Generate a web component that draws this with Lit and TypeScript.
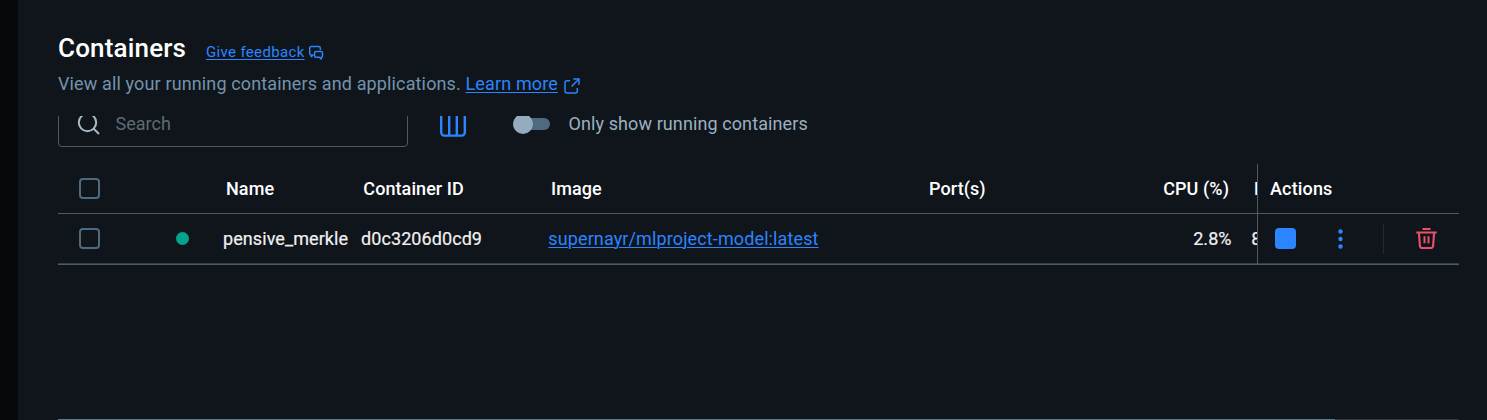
import { LitElement, html, css, svg } from "lit";
import { customElement } from "lit/decorators.js";

const feedbackIcon = svg`<svg width="16" height="16" viewBox="0 0 16 16" fill="none" stroke="currentColor" stroke-width="1.5" stroke-linejoin="round" stroke-linecap="round"><path d="M5.2 9.9H5L3.2 11.6V9.9Q1.7 9.9 1.7 8.4V3.1Q1.7 1.6 3.2 1.6H10.8Q12.3 1.6 12.3 3.1V4.6"/><path d="M8 6.4H13.1Q14.5 6.4 14.5 7.8V11Q14.5 12.3 13.3 12.3V14.1L11.4 12.3H8Q6.6 12.3 6.6 11V7.8Q6.6 6.4 8 6.4Z"/></svg>`;
const externalIcon = svg`<svg width="16" height="16" viewBox="0 0 16 16" fill="none" stroke="currentColor" stroke-width="1.5"><path d="M6 2.7H3Q1 2.7 1 4.7V13Q1 15 3 15H11.3Q13.3 15 13.3 13V10M9.3 1H15V6.7M15 1L7.5 8.5"/></svg>`;
const searchIcon = svg`<svg width="24" height="24" viewBox="0 0 24 24" fill="none" stroke="currentColor" stroke-width="2"><circle cx="10.5" cy="10.5" r="8.7"/><path d="M16.5 16.5L22 22"/></svg>`;
const columnsIcon = svg`<svg width="26" height="26" viewBox="0 0 26 26" fill="none" stroke="currentColor" stroke-width="2.4"><rect x="1.2" y="1.2" width="23.6" height="23.4" rx="3"/><path d="M9.2 1V24M16.8 1V24"/></svg>`;
const trashIcon = svg`<svg width="22" height="22" viewBox="0 0 22 22" fill="none" stroke="currentColor"><path stroke-width="2" d="M6.5 1H14.5M.3 4.6H20.7"/><path stroke-width="2.1" d="M2.9 4.7L3.9 17.8Q4.2 20 6.4 20H14.6Q16.8 20 17.1 17.8L18.1 4.7"/><path stroke-width="2" d="M8.5 8.3V15.3M12.5 8.3V15.3"/></svg>`;

@customElement("app-root")
export class AppRoot extends LitElement {
  static styles = css`
    :host { display: flex; height: 420px; overflow: hidden; background: #10151b; color: #fff; font: 18px/24px Roboto, sans-serif; }
    .rail { width: 18px; background: #05090c; flex: none; }
    main { flex: 1; min-width: 0; display: flex; flex-direction: column; padding: 0 28px 0 40px; }
    svg { display: block; flex: none; }
    a { color: #2a85ff; text-decoration: underline; text-underline-offset: 2px; text-decoration-thickness: 1px; }
    .title { display: flex; align-items: flex-start; height: 72px; box-sizing: border-box; padding-top: 32px; color: #2a85ff; }
    h1 { margin: 0; width: 148px; font-size: 26px; line-height: 32px; font-weight: 500; color: #fff; white-space: nowrap; letter-spacing: .17px; }
    .title a { font-size: 15px; line-height: 20px; margin-top: 10px; width: 102px; letter-spacing: .34px; white-space: nowrap; }
    .title svg { margin-top: 13px; }
    .sub { display: flex; height: 44px; color: #7393ad; white-space: pre; letter-spacing: .135px; }
    .sub svg { margin: 6px 0 0 6px; color: #2a85ff; }
    .tools { height: 48px; overflow: hidden; display: flex; align-items: flex-end; box-sizing: border-box; padding-bottom: 17px; }
    .search { box-sizing: border-box; flex: none; width: 350px; height: 48px; border: 1px solid #55595d; border-radius: 4px; display: flex; align-items: center; padding: 2px 0 0 18px; gap: 14.5px; color: #5f6b74; }
    .search svg { color: #a9bac8; }
    .cols { margin: 0 47px 10px 32px; color: #2a85ff; }
    .switch { display: flex; align-items: center; width: 37px; height: 12px; border-radius: 6px; background: #4e6a81; margin: 0 18.5px 17px 0; }
    .knob { width: 20px; height: 20px; flex: none; border-radius: 50%; background: #96abbd; }
    .label { color: #9ab0c0; margin-bottom: 11px; letter-spacing: .1px; }
    .table { display: flex; height: 101px; }
    .data { width: 1199px; overflow: hidden; flex: none; }
    .acts { width: 201px; border-left: 1px solid #55595d; }
    .head { height: 49px; border-bottom: 1px solid #55595d; font-weight: 500; letter-spacing: .08px; }
    .body { height: 49px; border-bottom: 1px solid #2d4251; box-shadow: 0 1px #55595d; color: #f0f0f0; letter-spacing: .08px; -webkit-text-stroke: .2px; }
    .body a { letter-spacing: .12px; -webkit-text-stroke: 0; padding-left: .3px; }
    .head, .body { display: flex; align-items: center; white-space: nowrap; }
    .grid { display: grid; grid-template-columns: 114px 51px 138px 187px 378px 200px 106px 60px; }
    .head .cell { padding-left: 3px; }
    .head .id { padding-left: 2.3px; }
    .num { text-align: right; padding-right: .4px; }
    .head .num { padding-right: 3px; }
    .mem { padding-left: 19.3px; }
    .head .mem { padding-left: 22px; }
    .box { box-sizing: border-box; width: 21px; height: 21px; border: 2px solid #4e6a81; border-radius: 4px; margin-left: 21px; }
    .dot { width: 13.6px; height: 13.6px; border-radius: 50%; background: #00a58c; margin-left: 3.5px; }
    .head .title-cell { padding-left: 12px; letter-spacing: .15px; }
    .stop { width: 21px; height: 21px; border-radius: 4px; background: #2a85ff; margin-left: 17px; }
    .more { color: #2a85ff; margin-left: 42px; }
    .sep { width: 1px; height: 30px; background: #252a30; margin: 0 32px 0 40px; }
    .trash { color: #ea5168; }
    .scroll { display: flex; height: 1px; margin-top: 154px; background: #33373c; }
    .thumb { width: 1277px; background: #60788b; }
  `;

  render() {
    return html`
      <div class="rail"></div>
      <main>
        <div class="title"><h1>Containers</h1><a>Give feedback</a>${feedbackIcon}</div>
        <div class="sub"><span>View all your running containers and applications. </span><a>Learn more</a>${externalIcon}</div>
        <div class="tools">
          <div class="search">${searchIcon}<span>Search</span></div>
          <div class="cols">${columnsIcon}</div>
          <div class="switch"><span class="knob"></span></div>
          <span class="label">Only show running containers</span>
        </div>
        <div class="table">
          <div class="data">
            <div class="head grid">
              <span class="box"></span><span></span><span class="cell">Name</span><span class="cell id">Container ID</span>
              <span class="cell">Image</span><span class="cell">Port(s)</span><span class="num">CPU (%)</span><span class="mem">M</span>
            </div>
            <div class="body grid">
              <span class="box"></span><span class="dot"></span><span>pensive_merkle</span><span>d0c3206d0cd9</span>
              <a>supernayr/mlproject-model:latest</a><span></span><span class="num">2.8%</span><span class="mem">8</span>
            </div>
          </div>
          <div class="acts">
            <div class="head"><span class="title-cell">Actions</span></div>
            <div class="body">
              <span class="stop"></span>
              <svg class="more" width="5" height="20" viewBox="0 0 5 20" fill="currentColor"><circle cx="2.5" cy="2.5" r="2.2"/><circle cx="2.5" cy="10" r="2.2"/><circle cx="2.5" cy="17.5" r="2.2"/></svg>
              <span class="sep"></span><span class="trash">${trashIcon}</span>
            </div>
          </div>
        </div>
        <div class="scroll"><span class="thumb"></span></div>
      </main>
    `;
  }
}
